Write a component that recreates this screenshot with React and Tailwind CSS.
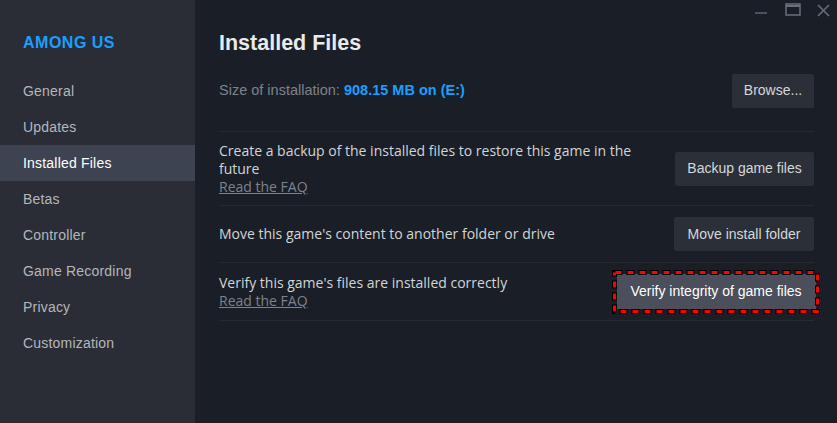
import React from "react";

const navItems = [
  "General",
  "Updates",
  "Installed Files",
  "Betas",
  "Controller",
  "Game Recording",
  "Privacy",
  "Customization",
];

const body = { fontFamily: '"Open Sans", "Liberation Sans", sans-serif' };

function Btn({ children, className = "" }) {
  return (
    <button
      className={
        "h-[34px] rounded-[2px] bg-[#2b2f37] text-[#d6d8da] text-[14px] whitespace-nowrap " +
        className
      }
    >
      {children}
    </button>
  );
}

function HighlightBtn() {
  return (
    <div className="relative w-[208px] h-[44px] shrink-0 flex items-center justify-center">
      <button className="w-[199px] h-[35px] bg-[#4b4f5b] text-white text-[14px] whitespace-nowrap">
        Verify integrity of game files
      </button>
      <svg
        className="absolute inset-0 pointer-events-none"
        width="208"
        height="44"
        viewBox="0 0 208 44"
      >
        <rect
          x="2.5"
          y="2.5"
          width="203"
          height="39"
          fill="none"
          stroke="#000"
          strokeWidth="5"
          strokeDasharray="8 4"
        />
        <rect
          x="2.5"
          y="2.5"
          width="203"
          height="39"
          fill="none"
          stroke="#ff0000"
          strokeWidth="3"
          strokeDasharray="6 6"
          strokeDashoffset="-1"
        />
      </svg>
    </div>
  );
}

export default function App() {
  return (
    <div
      className="w-[837px] h-[423px] flex bg-[#1a1e26] overflow-hidden"
      style={{ fontFamily: '"Liberation Sans", Arial, sans-serif' }}
    >
      {/* Sidebar */}
      <div className="w-[195px] shrink-0 bg-[#2a2d35] flex flex-col">
        <div className="pl-[23px] pt-[31px] h-[73px] text-[16px] font-bold text-[#1a9fff] tracking-[0.5px]">
          AMONG US
        </div>
        <div className="flex flex-col">
          {navItems.map((n) => (
            <div
              key={n}
              className={
                "h-[36px] pl-[23px] flex items-center text-[14px] tracking-[0.2px] " +
                (n === "Installed Files"
                  ? "bg-[#3d4350] text-white"
                  : "text-[#b3b7bb]")
              }
            >
              {n}
            </div>
          ))}
        </div>
      </div>

      {/* Main */}
      <div className="flex-1 relative flex flex-col pl-[24px] pr-[23px]">
        {/* window controls */}
        <div className="absolute top-0 right-0 flex items-center h-[20px]">
          <div className="w-[32px] flex justify-center">
            <svg width="14" height="14" viewBox="0 0 14 14">
              <path d="M1 10h12" stroke="#5d636c" strokeWidth="1.5" />
            </svg>
          </div>
          <div className="w-[32px] flex justify-center">
            <svg width="16" height="14" viewBox="0 0 16 14">
              <rect x="1" y="1" width="14" height="11" fill="none" stroke="#6a7079" strokeWidth="1.5" />
              <path d="M1 3h14" stroke="#6a7079" strokeWidth="2" />
            </svg>
          </div>
          <div className="w-[28px] flex justify-center">
            <svg width="13" height="13" viewBox="0 0 13 13">
              <path d="M1 1l11 11M12 1L1 12" stroke="#6a7079" strokeWidth="1.5" />
            </svg>
          </div>
        </div>

        <div className="pt-[27px] h-[73px] text-[21.5px] font-bold text-[#e8eaeb]">
          Installed Files
        </div>

        <div className="h-[35px] flex items-center justify-between">
          <div className="text-[14.5px] text-[#7d838b]">
            Size of installation:{" "}
            <span className="text-[#1a9fff] font-bold">908.15 MB on (E:)</span>
          </div>
          <Btn className="w-[82px]">Browse...</Btn>
        </div>

        <div className="h-[23px]" />

        <div className="border-t border-[#262a32] h-[74px] flex items-center justify-between">
          <div className="w-[425px] text-[14px] leading-[18px] text-[#d2d5d8]" style={body}>
            Create a backup of the installed files to restore this game in the
            future
            <div className="underline text-[#7d838b]">Read the FAQ</div>
          </div>
          <Btn className="w-[139px]">Backup game files</Btn>
        </div>

        <div className="border-t border-[#262a32] h-[57px] flex items-center justify-between">
          <div className="text-[14px] leading-[18px] text-[#d2d5d8]" style={body}>
            Move this game's content to another folder or drive
          </div>
          <Btn className="w-[140px]">Move install folder</Btn>
        </div>

        <div className="border-t border-[#262a32] h-[58px] flex items-center justify-between">
          <div className="text-[14px] leading-[18px] text-[#d2d5d8]" style={body}>
            Verify this game's files are installed correctly
            <div className="underline text-[#7d838b]">Read the FAQ</div>
          </div>
          <div className="-mr-[6px]">
            <HighlightBtn />
          </div>
        </div>

        <div className="border-t border-[#262a32]" />
      </div>
    </div>
  );
}
